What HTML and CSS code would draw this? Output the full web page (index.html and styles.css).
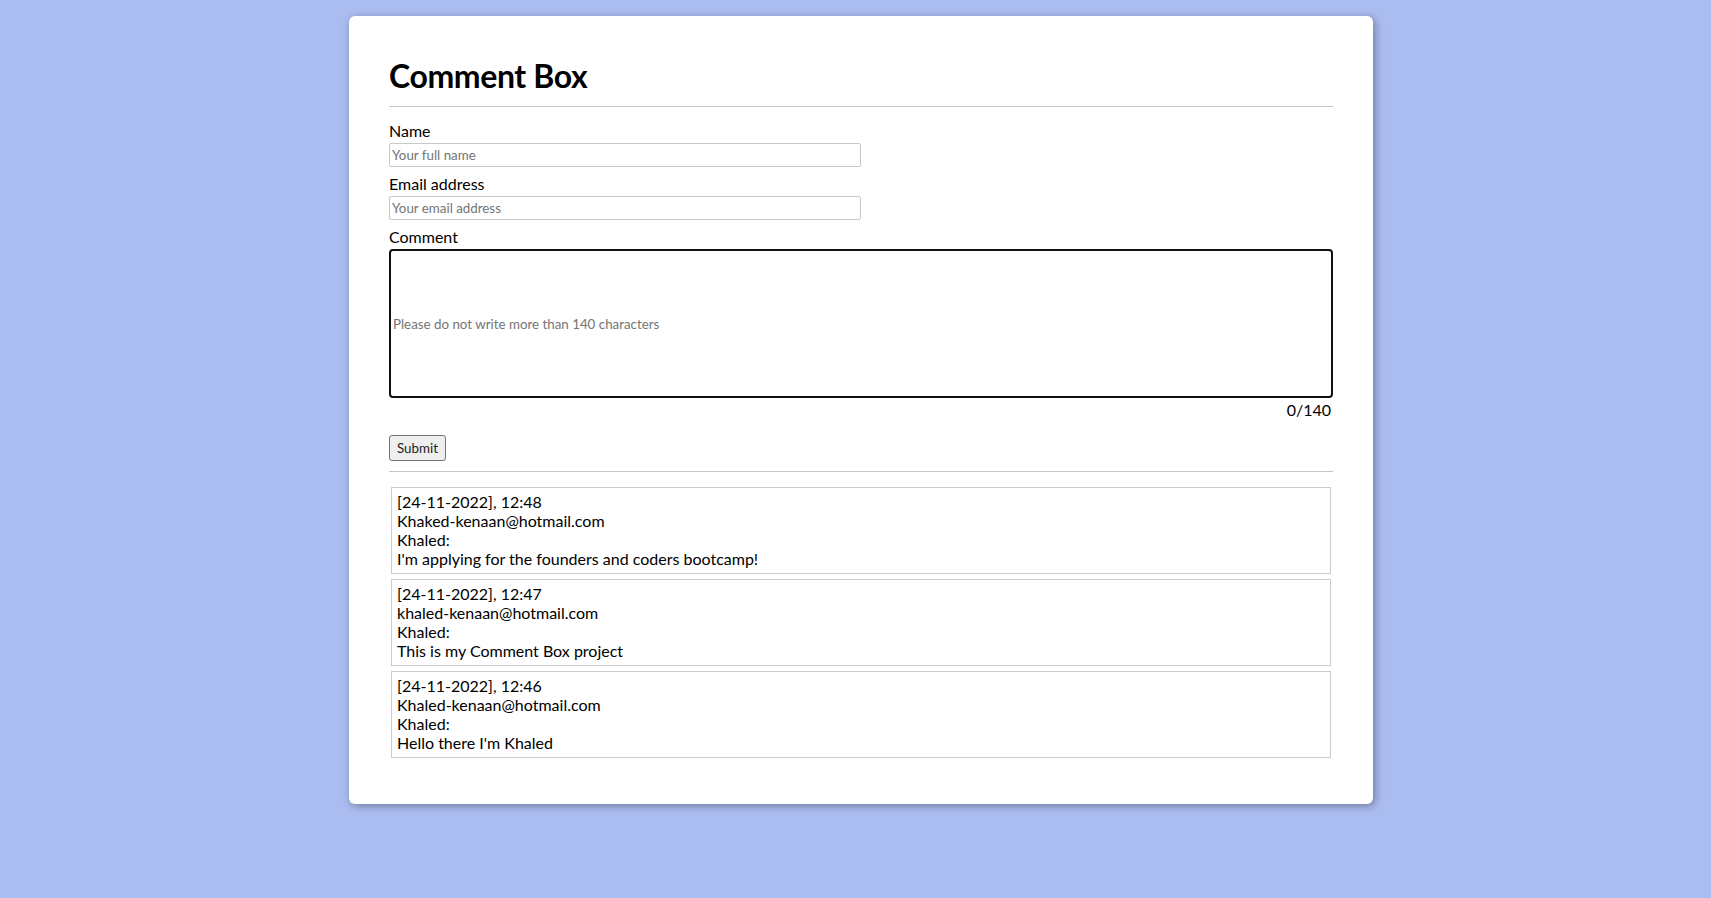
FILE: index.html
```html
<!DOCTYPE html>
<html lang="en">
<head>
<meta charset="utf-8">
<title>Comment Box</title>
<link rel="stylesheet" href="styles.css">
</head>
<body>
<main class="card">
  <h1 class="title">Comment Box</h1>
  <hr class="rule rule-top">
  <form class="form">
    <label class="label label-first" for="name">Name</label>
    <input class="field" id="name" type="text" placeholder="Your full name">
    <label class="label" for="email">Email address</label>
    <input class="field" id="email" type="email" placeholder="Your email address">
    <label class="label" for="comment">Comment</label>
    <input class="comment-field" id="comment" type="text" placeholder="Please do not write more than 140 characters">
    <div class="counter">0/140</div>
    <div class="actions"><button class="submit" type="button">Submit</button></div>
  </form>
  <hr class="rule rule-bottom">
  <section class="comments">
    <div class="comment">
      <div>[24-11-2022], 12:48</div>
      <div>Khaked-kenaan@hotmail.com</div>
      <div>Khaled:</div>
      <div>I'm applying for the founders and coders bootcamp!</div>
    </div>
    <div class="comment">
      <div>[24-11-2022], 12:47</div>
      <div>khaled-kenaan@hotmail.com</div>
      <div>Khaled:</div>
      <div>This is my Comment Box project</div>
    </div>
    <div class="comment">
      <div>[24-11-2022], 12:46</div>
      <div>Khaled-kenaan@hotmail.com</div>
      <div>Khaled:</div>
      <div>Hello there I'm Khaled</div>
    </div>
  </section>
</main>
</body>
</html>
```
FILE: styles.css
```css
html, body {
  margin: 0;
  background: #abbcf0;
}
body {
  padding: 16px 0 0 11px;
  font-family: Lato, "Liberation Sans", sans-serif;
  color: #000;
  min-height: 898px;
  box-sizing: border-box;
}
.card {
  width: 1024px;
  box-sizing: border-box;
  margin: 0 auto;
  background: #fff;
  border-radius: 6px;
  box-shadow: 2px 2px 8px rgba(0, 0, 0, 0.35);
  padding: 40px 40px 46px 40px;
}
.title {
  margin: 0 0 11px 0;
  font-size: 32px;
  font-weight: 700;
  letter-spacing: -0.4px;
  line-height: normal;
}
.rule {
  border: 0;
  border-top: 1px solid #c4c4c4;
  margin: 0;
  height: 0;
}
.form {
  display: flex;
  flex-direction: column;
  align-items: flex-start;
}
.label {
  display: block;
  font-size: 16px;
  line-height: normal;
  margin: 7px 0 3px 0;
}
.label-first {
  margin-top: 14px;
}
.field {
  width: 472px;
  height: 24px;
  box-sizing: border-box;
  border: 1px solid #c8c8c8;
  border-radius: 2px;
  padding: 0 2px;
  font-family: Lato, "Liberation Sans", sans-serif;
  font-size: 13.333px;
  outline: none;
}
.field::placeholder,
.comment-field::placeholder {
  color: #757575;
}
.comment-field {
  width: 100%;
  height: 149px;
  box-sizing: border-box;
  border: 2px solid #111;
  border-radius: 4px;
  padding: 0 2px;
  font-family: Lato, "Liberation Sans", sans-serif;
  font-size: 13.333px;
  outline: none;
}
.counter {
  align-self: stretch;
  text-align: right;
  font-size: 16px;
  line-height: normal;
  margin-top: 2px;
  padding-right: 2px;
}
.actions {
  margin-top: 16px;
  margin-bottom: 10px;
}
.submit {
  display: block;
  font-family: Lato, "Liberation Sans", sans-serif;
  font-size: 13.333px;
  line-height: normal;
  color: #222;
  background: #efefef;
  border: 1px solid #767676;
  border-radius: 3px;
  padding: 4px 7px;
}
.comments {
  display: flex;
  flex-direction: column;
  gap: 5px;
  margin: 15px 2px 0 2px;
}
.comment {
  border: 1px solid #cccccc;
  padding: 4px 5px 5px 5px;
  font-size: 16px;
  line-height: normal;
}
```
